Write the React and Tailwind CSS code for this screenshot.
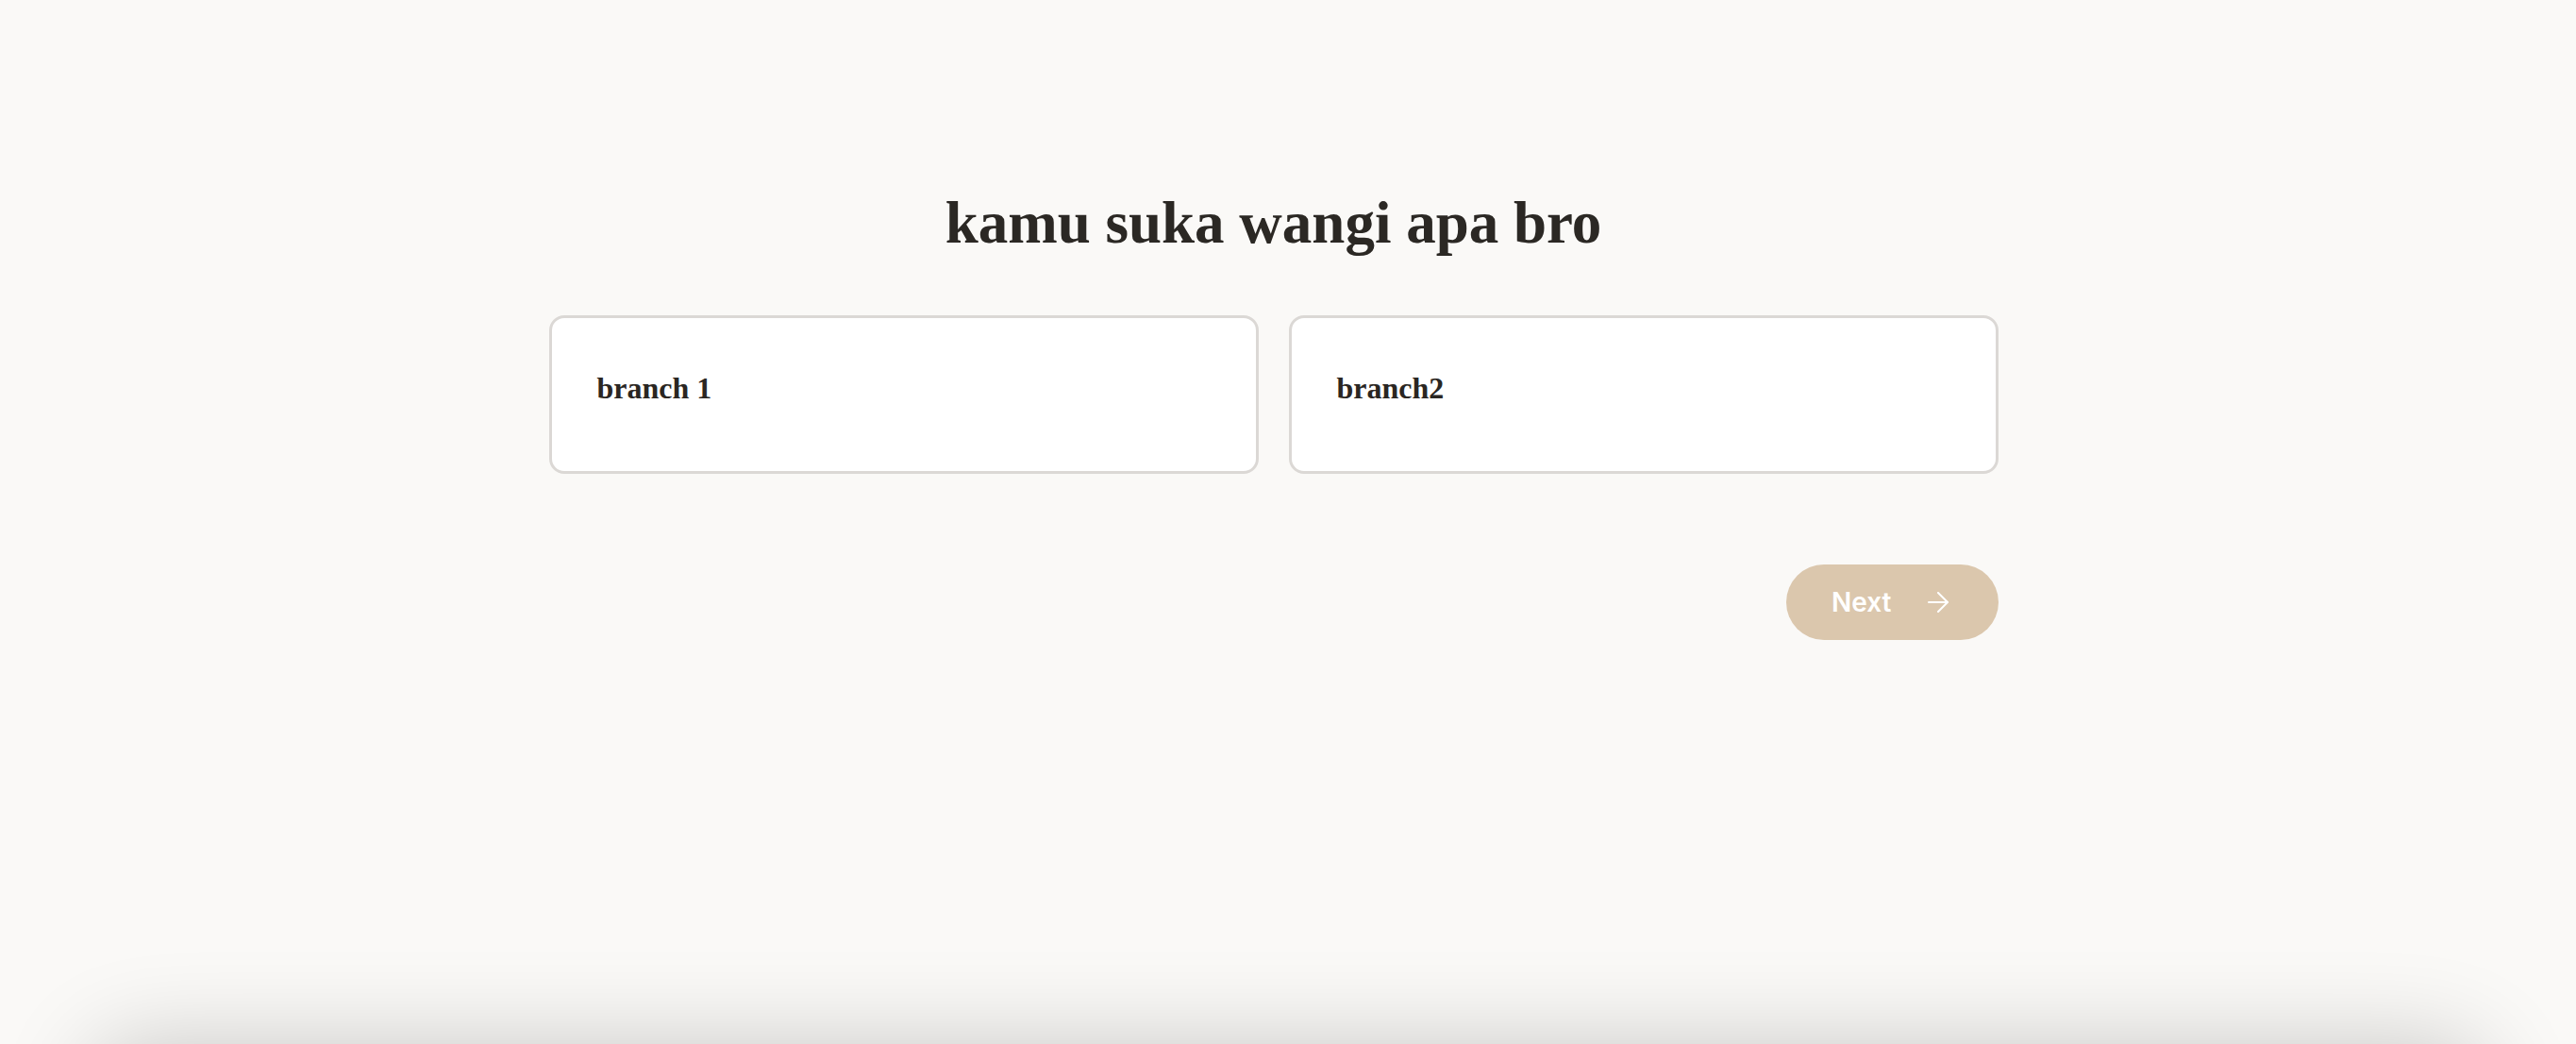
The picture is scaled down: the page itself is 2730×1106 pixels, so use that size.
export default function App() {
  const serif = { fontFamily: '"Liberation Serif", "DejaVu Serif", serif' };
  return (
    <div className="min-h-screen bg-[#faf9f7] overflow-hidden">
      <main className="h-[1106px] pr-[31px] pt-[205px]">
        <div className="max-w-[1536px] mx-auto">
          <h1
            className="text-center text-[63px] leading-none font-bold text-[#2b2824]"
            style={serif}
          >
            kamu suka wangi apa bro
          </h1>
          <div className="grid grid-cols-2 gap-8 mt-[66px]">
            {["branch 1", "branch2"].map((t) => (
              <button
                key={t}
                className="h-[168px] border-[3px] border-[#dbd8d5] rounded-2xl bg-white px-12 pb-[14px] flex items-center text-left"
              >
                <span
                  className="text-[32px] font-bold text-[#2a2622]"
                  style={serif}
                >
                  {t}
                </span>
              </button>
            ))}
          </div>
          <div className="flex justify-end mt-24">
            <button
              className="h-[80px] pl-12 pr-[53px] rounded-full bg-[#dbc7ad] text-white flex items-center gap-[38px]"
              style={{ fontFamily: 'Inter, "Liberation Sans", sans-serif' }}
            >
              <span className="text-[28px] font-semibold leading-none">Next</span>
              <svg width="22" height="22" viewBox="0 0 22 22" fill="none" stroke="currentColor" strokeWidth="2" strokeLinecap="round" strokeLinejoin="round">
                <path d="M1 11h20" />
                <path d="M11 1l10 10-10 10" />
              </svg>
            </button>
          </div>
        </div>
      </main>
      <div className="mx-[96px] h-[400px] rounded-[48px] bg-[#faf9f7] shadow-[0_0_100px_rgba(0,0,0,0.2)]" />
    </div>
  );
}
